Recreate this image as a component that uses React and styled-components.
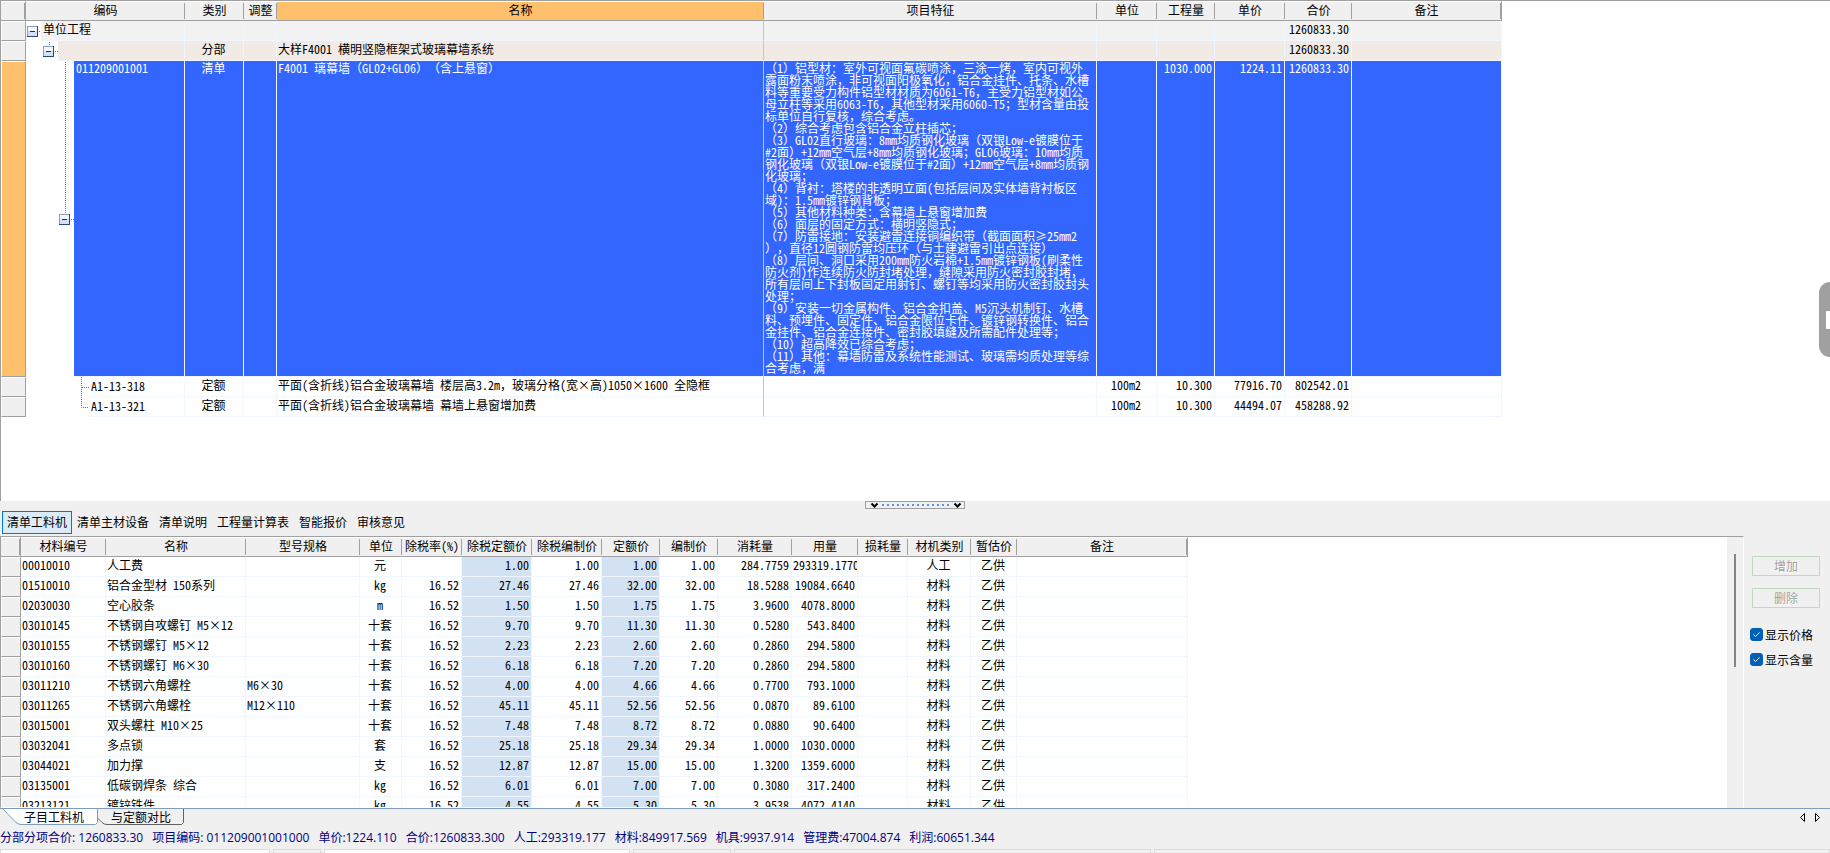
import React from 'react'
import styled, { createGlobalStyle } from 'styled-components'

const GlobalStyle = createGlobalStyle`
  *, *::before, *::after {
    box-sizing: border-box;
  }

  html, body, #root {
    height: 100%;
    margin: 0;
  }

  body, button, input {
    font-family: 'Noto Sans Mono CJK SC', 'Noto Sans CJK SC', sans-serif;
    font-size: 12px;
    line-height: 16px;
    color: #000;
    text-spacing-trim: space-all;
  }
`

const Window = styled.div`
  display: flex;
  flex-direction: column;
  height: 100vh;
  min-height: 600px;
  overflow: hidden;
  background: #f0f0f0;
`

const BudgetPane = styled.section`
  flex: 0 0 501px;
  overflow: hidden;
  background: #fff;
  border-top: 1px solid #a0a0a0;
  border-left: 1px solid #a0a0a0;
`

const Grid = styled.table`
  table-layout: fixed;
  width: ${props => props.$width}px;
  border-collapse: separate;
  border-spacing: 0;
`

const HeadCell = styled.th`
  height: 20px;
  padding: 0 0 2px;
  overflow: hidden;
  font-weight: 400;
  white-space: nowrap;
  background: linear-gradient(#a0a0a0, #a0a0a0) right 1px / 1px 16px no-repeat
    ${props => (props.$active ? '#ffc06e' : '#f0f0f0')};
  border-bottom: 1px solid #a0a0a0;
  border-top: 1px solid #fff;

  &:first-child,
  &:last-child {
    border-right: 1px solid #a0a0a0;
  }
`

const RowHead = styled.th`
  padding: 0;
  background: ${props => (props.$active ? '#ffc06e' : '#f0f0f0')};
  border: 1px solid #a0a0a0;
  border-top-color: #fff;
  border-left-color: #fff;
`

const Cell = styled.td`
  height: 20px;
  padding: ${props => (props.$top ? '1px 2px 0 1px' : '0 2px 3px 1px')};
  overflow: hidden;
  line-height: ${props => (props.$top ? 12 : 16)}px;
  vertical-align: top;
  text-align: ${props => props.$align || 'left'};
  white-space: pre;
  background: ${props => props.$tint || 'transparent'};
  border-right: 1px solid #f0f6ff;
  border-bottom: 1px solid #f0f6ff;
`

const rowColors = {
  unit: { back: '#f2f2f2', text: '#000' },
  section: { back: '#f2eae4', text: '#000' },
  item: { back: '#3366ff', text: '#fff' },
  quota: { back: '#fff', text: '#000' },
}

const BudgetRow = styled.tr`
  height: ${props => (props.$kind === 'item' ? 316 : 20)}px;
  color: ${props => rowColors[props.$kind].text};

  ${Cell} {
    background: ${props => rowColors[props.$kind].back};
  }

  ${Cell}:nth-child(5) {
    border-right-color: #a6caf0;
  }
`

const TreeCell = styled.td`
  height: inherit;
  padding: 0;
  border-right: 1px solid #f0f6ff;
`

const TreeLine = styled.div`
  display: flex;
  height: ${props => (props.$kind === 'item' ? 316 : 20)}px;
`

const Branch = styled.svg`
  flex: none;
  display: block;
`

const Code = styled.span`
  flex: 1;
  padding-left: 2px;
  line-height: ${props => (props.$kind === 'quota' ? 18 : props.$kind === 'item' ? 14 : 16)}px;
  background: ${props => rowColors[props.$kind].back};
  border-bottom: 1px solid #f0f6ff;
`

const Splitter = styled.div`
  flex: 0 0 10px;
  display: flex;
  justify-content: center;
  align-items: flex-start;
`

const SplitterHandle = styled.button`
  display: block;
  width: 100px;
  height: 8px;
  padding: 0;
  background: #f0f0f0;
  border: 1px solid #a0a0a0;

  svg {
    display: block;
  }
`

const DetailTabs = styled.nav`
  flex: 0 0 25px;
  display: flex;
  align-items: flex-start;
  padding-left: 2px;
`

const DetailTab = styled.button`
  height: 23px;
  padding: 0 4px 1px;
  background: ${props => (props.$active ? '#dcebf8' : 'transparent')};
  border: 1px solid ${props => (props.$active ? '#0078d7' : 'transparent')};
`

const DetailPane = styled.section`
  flex: 1;
  min-height: 0;
  display: flex;
`

const DetailGrid = styled.div`
  flex: 1;
  overflow: hidden;
  background: #fff;
  border-top: 1px solid #a0a0a0;
  border-left: 1px solid #a0a0a0;
  border-bottom: 1px solid #fff;
`

const ScrollTrack = styled.div`
  flex: 0 0 17px;
  padding: 17px 7px 0;
  border-top: 1px solid #a0a0a0;
  border-right: 1px solid #fff;
`

const ScrollThumb = styled.div`
  width: 2px;
  height: 113px;
  background: #858585;
`

const SidePanel = styled.aside`
  flex: 0 0 86px;
  display: flex;
  flex-direction: column;
  padding: 20px 10px 0 6px;
`

const SideButton = styled.button`
  height: 20px;
  margin: 0 0 12px 2px;
  padding: 0;
  background: #f0f0f0;
  border: 1px solid #bcdcbc;

  &:disabled {
    color: #a0a0a0;
    text-shadow: 1px 1px 0 #fff;
  }
`

const CheckLabel = styled.label`
  display: flex;
  align-items: center;
  gap: 2px;
  height: 17px;
  margin-top: 6px;
  margin-bottom: 2px;
  white-space: nowrap;
`

const CheckBox = styled.input`
  appearance: none;
  width: 13px;
  height: 13px;
  margin: 0;
  border: 1px solid #868686;
  border-radius: 3px;

  &:checked {
    border-color: #005fb8;
    background: #005fb8
      url("data:image/svg+xml,%3Csvg xmlns='http://www.w3.org/2000/svg' viewBox='0 0 11 11'%3E%3Cpath d='M2.500 5.500L4.500 7.500L8.500 3.500' fill='none' stroke='%23fff'/%3E%3C/svg%3E");
  }
`

const SheetBar = styled.nav`
  flex: 0 0 19px;
  display: flex;
  justify-content: space-between;
  border-top: 1px solid #7f9db9;
`

const Sheets = styled.div`
  display: flex;
`

const Sheet = styled.button`
  position: relative;
  width: ${props => (props.$active ? 98 : 86)}px;
  height: 17px;
  padding: ${props => (props.$active ? '0 0 2px 10px' : '0 0 2px')};
  line-height: 14px;
  background: none;
  border: 0;

  svg {
    position: absolute;
    inset: 0;
  }

  span {
    position: relative;
  }
`

const SheetArrows = styled.div`
  display: flex;
  gap: 6px;
  padding: 4px 7px 0 0;
`

const ArrowButton = styled.button`
  width: 10px;
  height: 10px;
  padding: 0;
  background: none;
  border: 0;

  svg {
    display: block;
  }
`

const StatusBar = styled.footer`
  flex: 0 0 22px;
  display: flex;
  gap: 9px;
  overflow: hidden;
  font-family: 'Open Sans', 'Noto Sans CJK SC', sans-serif;
  line-height: 22px;
  white-space: pre;
  color: #000080;
`

const BottomStrip = styled.div`
  flex: 0 0 4px;
  display: flex;
  gap: 3px;
`

const StripCell = styled.div`
  flex: ${props => (props.$width ? `0 0 ${props.$width}px` : '1')};
  background: ${props => (props.$light ? '#fff' : '#f0f0f0')};
  border: 1px solid #dcdcdc;
  border-bottom: 0;
`

const budgetColumns = [
  { title: '编码', width: 159 },
  { title: '类别', width: 59 },
  { title: '调整', width: 33 },
  { title: '名称', width: 487, active: true },
  { title: '项目特征', width: 333 },
  { title: '单位', width: 60 },
  { title: '工程量', width: 58 },
  { title: '单价', width: 70 },
  { title: '合价', width: 67 },
  { title: '备注', width: 150 },
]

const feature = `（1）铝型材：室外可视面氟碳喷涂，三涂一烤，室内可视外
露面粉末喷涂，非可视面阳极氧化，铝合金挂件、托条、水槽
料等重要受力构件铝型材材质为6061-T6，主受力铝型材如公
母立柱等采用6063-T6，其他型材采用6060-T5；型材含量由投
标单位自行复核，综合考虑。
（2）综合考虑包含铝合金立柱插芯；
（3）GL02直行玻璃：8mm均质钢化玻璃（双银Low-e镀膜位于
#2面）+12mm空气层+8mm均质钢化玻璃；GL06玻璃：10mm均质
钢化玻璃（双银Low-e镀膜位于#2面）+12mm空气层+8mm均质钢
化玻璃；
（4）背衬：塔楼的非透明立面(包括层间及实体墙背衬板区
域)：1.5mm镀锌钢背板；
（5）其他材料种类：含幕墙上悬窗增加费
（6）面层的固定方式：横明竖隐式；
（7）防雷接地：安装避雷连接铜编织带（截面面积≥25mm2
），直径12圆钢防雷均压环（与土建避雷引出点连接）
（8）层间、洞口采用200mm防火岩棉+1.5mm镀锌钢板(刷柔性
防火剂)作连续防火防封堵处理，缝隙采用防火密封胶封堵，
所有层间上下封板固定用射钉、螺钉等均采用防火密封胶封头
处理；
（9）安装一切金属构件、铝合金扣盖、M5沉头机制钉、水槽
料、预埋件、固定件、铝合金限位卡件、镀锌钢转换件、铝合
金挂件、铝合金连接件、密封胶填缝及所需配件处理等；
（10）超高降效已综合考虑；
（11）其他：幕墙防雷及系统性能测试、玻璃需均质处理等综
合考虑，满`

const budgetRows = [
  { kind: 'unit', code: '单位工程', total: '1260833.30' },
  {
    kind: 'section',
    type: '分部',
    name: '大样F4001 横明竖隐框架式玻璃幕墙系统',
    total: '1260833.30',
  },
  {
    kind: 'item',
    code: '011209001001',
    type: '清单',
    name: 'F4001 璃幕墙（GL02+GL06）（含上悬窗）',
    feature,
    qty: '1030.000',
    price: '1224.11',
    total: '1260833.30',
  },
  {
    kind: 'quota',
    code: 'A1-13-318',
    type: '定额',
    name: '平面(含折线)铝合金玻璃幕墙 楼层高3.2m，玻璃分格(宽×高)1050×1600 全隐框',
    unit: '100m2',
    qty: '10.300',
    price: '77916.70',
    total: '802542.01',
  },
  {
    kind: 'quota',
    code: 'A1-13-321',
    type: '定额',
    name: '平面(含折线)铝合金玻璃幕墙 幕墙上悬窗增加费',
    unit: '100m2',
    qty: '10.300',
    price: '44494.07',
    total: '458288.92',
    last: true,
  },
]

const blue = '#d2e2f3'

const materialColumns = [
  { title: '材料编号', width: 85 },
  { title: '名称', width: 140 },
  { title: '型号规格', width: 114 },
  { title: '单位', width: 42, align: 'center' },
  { title: '除税率(%)', width: 60, align: 'right' },
  { title: '除税定额价', width: 70, align: 'right', tint: blue },
  { title: '除税编制价', width: 70, align: 'right' },
  { title: '定额价', width: 58, align: 'right', tint: blue },
  { title: '编制价', width: 58, align: 'right' },
  { title: '消耗量', width: 74, align: 'right' },
  { title: '用量', width: 66, align: 'right' },
  { title: '损耗量', width: 50, align: 'right' },
  { title: '材机类别', width: 63, align: 'center' },
  { title: '暂估价', width: 46, align: 'center' },
  { title: '备注', width: 171 },
]

// code, name, spec, unit, tax rate, pre-tax price, price, consumption, amount, type
const materials = [
  ['00010010', '人工费', '', '元', '', '1.00', '1.00', '284.7759', '293319.1770', '人工'],
  ['01510010', '铝合金型材 150系列', '', 'kg', '16.52', '27.46', '32.00', '18.5288', '19084.6640', '材料'],
  ['02030030', '空心胶条', '', 'm', '16.52', '1.50', '1.75', '3.9600', '4078.8000', '材料'],
  ['03010145', '不锈钢自攻螺钉 M5×12', '', '十套', '16.52', '9.70', '11.30', '0.5280', '543.8400', '材料'],
  ['03010155', '不锈钢螺钉 M5×12', '', '十套', '16.52', '2.23', '2.60', '0.2860', '294.5800', '材料'],
  ['03010160', '不锈钢螺钉 M6×30', '', '十套', '16.52', '6.18', '7.20', '0.2860', '294.5800', '材料'],
  ['03011210', '不锈钢六角螺栓', 'M6×30', '十套', '16.52', '4.00', '4.66', '0.7700', '793.1000', '材料'],
  ['03011265', '不锈钢六角螺栓', 'M12×110', '十套', '16.52', '45.11', '52.56', '0.0870', '89.6100', '材料'],
  ['03015001', '双头螺柱 M10×25', '', '十套', '16.52', '7.48', '8.72', '0.0880', '90.6400', '材料'],
  ['03032041', '多点锁', '', '套', '16.52', '25.18', '29.34', '1.0000', '1030.0000', '材料'],
  ['03044021', '加力撑', '', '支', '16.52', '12.87', '15.00', '1.3200', '1359.6000', '材料'],
  ['03135001', '低碳钢焊条 综合', '', 'kg', '16.52', '6.01', '7.00', '0.3080', '317.2400', '材料'],
  ['03213121', '镀锌铁件', '', 'kg', '16.52', '4.55', '5.30', '3.9538', '4072.4140', '材料'],
]

const detailTabs = ['清单工料机', '清单主材设备', '清单说明', '工程量计算表', '智能报价', '审核意见']

const totals = [
  '分部分项合价: 1260833.30',
  '项目编码: 011209001001000',
  '单价:1224.110',
  '合价:1260833.300',
  '人工:293319.177',
  '材料:849917.569',
  '机具:9937.914',
  '管理费:47004.874',
  '利润:60651.344',
]

const Toggle = ({ x, y }) => (
  <g>
    <rect x={x + 0.5} y={y + 0.5} width="10" height="10" fill="#d3dff4" stroke="#8a9cbe" />
    <path d={`M${x + 1} ${y + 1}h9v4h-9z`} fill="#f3f6fc" />
    <path d={`M${x + 10.5} ${y}v10.500h-10.500`} fill="none" stroke="#2c4674" />
    <path d={`M${x + 3} ${y + 5.5}h5`} stroke="#1c2f55" />
  </g>
)

const dots = { stroke: '#707070', strokeDasharray: '1 1', fill: 'none' }

const TreeBranch = ({ kind, last }) => {
  if (kind === 'unit') {
    return (
      <Branch width="15" height="20">
        <Toggle x={1} y={5} />
        <path d="M13 10.500h2" {...dots} />
      </Branch>
    )
  }
  if (kind === 'section') {
    return (
      <Branch width="32" height="20">
        <path d="M23.500 1v4M29 10.500h3" {...dots} />
        <Toggle x={17} y={5} />
      </Branch>
    )
  }
  if (kind === 'item') {
    return (
      <Branch width="48" height="316">
        <path d="M39.500 1v152M45 158.500h3" {...dots} />
        <Toggle x={33} y={153} />
      </Branch>
    )
  }
  return (
    <Branch width="63" height="20">
      <path d={last ? 'M55.500 0v10.500h8' : 'M55.500 0v20M56 10.500h8'} {...dots} />
    </Branch>
  )
}

const BudgetTable = () => (
  <Grid $width={1501}>
    <colgroup>
      <col style={{ width: 25 }} />
      {budgetColumns.map(col => (
        <col key={col.title} style={{ width: col.width }} />
      ))}
    </colgroup>
    <thead>
      <tr>
        <HeadCell />
        {budgetColumns.map(col => (
          <HeadCell key={col.title} $active={col.active}>
            {col.title}
          </HeadCell>
        ))}
      </tr>
    </thead>
    <tbody>
      {budgetRows.map((row, i) => {
        const top = row.kind === 'item'
        return (
          <BudgetRow key={i} $kind={row.kind}>
            <RowHead $active={top} />
            <TreeCell>
              <TreeLine $kind={row.kind}>
                <TreeBranch kind={row.kind} last={row.last} />
                <Code $kind={row.kind}>{row.code}</Code>
              </TreeLine>
            </TreeCell>
            <Cell $top={top} $align="center">{row.type}</Cell>
            <Cell $top={top} />
            <Cell $top={top}>{row.name}</Cell>
            <Cell $top={top}>{row.feature}</Cell>
            <Cell $top={top} $align="center">{row.unit}</Cell>
            <Cell $top={top} $align="right">{row.qty}</Cell>
            <Cell $top={top} $align="right">{row.price}</Cell>
            <Cell $top={top} $align="right">{row.total}</Cell>
            <Cell $top={top} />
          </BudgetRow>
        )
      })}
    </tbody>
  </Grid>
)

const MaterialTable = () => (
  <Grid $width={1187}>
    <colgroup>
      <col style={{ width: 20 }} />
      {materialColumns.map(col => (
        <col key={col.title} style={{ width: col.width }} />
      ))}
    </colgroup>
    <thead>
      <tr>
        <HeadCell />
        {materialColumns.map(col => (
          <HeadCell key={col.title}>{col.title}</HeadCell>
        ))}
      </tr>
    </thead>
    <tbody>
      {materials.map(([code, name, spec, unit, rate, net, price, use, amount, type]) => {
        const values = [code, name, spec, unit, rate, net, net, price, price, use, amount, '', type, '乙供', '']
        return (
          <tr key={code}>
            <RowHead />
            {materialColumns.map((col, i) => (
              <Cell key={col.title} $align={col.align} $tint={col.tint}>
                {values[i]}
              </Cell>
            ))}
          </tr>
        )
      })}
    </tbody>
  </Grid>
)

const DrawerGrip = styled.button`
  position: fixed;
  top: 282px;
  right: 0;
  width: 11px;
  height: 75px;
  padding: 0;
  background: #a0a0a0;
  border: 0;
  border-radius: 11px 0 0 11px;

  &::after {
    content: '';
    position: absolute;
    top: 29px;
    right: 0;
    width: 4px;
    height: 18px;
    background: #fff;
  }
`

const App = () => (
  <Window>
    <GlobalStyle />
    <BudgetPane>
      <BudgetTable />
    </BudgetPane>
    <Splitter>
      <SplitterHandle aria-label="折叠">
        <svg width="98" height="6">
          <path d="M5.500 1.500l3 3l3 -3M88.500 1.500l3 3l3 -3" fill="none" stroke="#000" strokeWidth="2" />
          <path d="M16 3h68" stroke="#5a96dc" strokeWidth="2" strokeDasharray="2 3" />
        </svg>
      </SplitterHandle>
    </Splitter>
    <DetailTabs>
      {detailTabs.map((tab, i) => (
        <DetailTab key={tab} $active={i === 0}>
          {tab}
        </DetailTab>
      ))}
    </DetailTabs>
    <DetailPane>
      <DetailGrid>
        <MaterialTable />
      </DetailGrid>
      <ScrollTrack>
        <ScrollThumb />
      </ScrollTrack>
      <SidePanel>
        <SideButton disabled>增加</SideButton>
        <SideButton disabled>删除</SideButton>
        <CheckLabel>
          <CheckBox type="checkbox" defaultChecked />
          显示价格
        </CheckLabel>
        <CheckLabel>
          <CheckBox type="checkbox" defaultChecked />
          显示含量
        </CheckLabel>
      </SidePanel>
    </DetailPane>
    <SheetBar>
      <Sheets>
        <Sheet $active>
          <svg width="98" height="17">
            <path d="M2 -1L15 12.500Q18 15.500 21 15.500H95.500L97.500 13.500V-1" fill="#fff" stroke="#7f9db9" />
          </svg>
          <span>子目工料机</span>
        </Sheet>
        <Sheet>
          <svg width="86" height="17">
            <path d="M-0.500 9L4 13.500Q6 15.500 9 15.500H83.500L85.500 13.500V0" fill="none" stroke="#606060" />
          </svg>
          <span>与定额对比</span>
        </Sheet>
      </Sheets>
      <SheetArrows>
        <ArrowButton aria-label="向左">
          <svg width="10" height="10">
            <path d="M7.500 0.500v8l-4 -4z" fill="none" stroke="#000" />
          </svg>
        </ArrowButton>
        <ArrowButton aria-label="向右">
          <svg width="10" height="10">
            <path d="M2.500 0.500v8l4 -4z" fill="none" stroke="#000" />
          </svg>
        </ArrowButton>
      </SheetArrows>
    </SheetBar>
    <StatusBar>
      {totals.map(text => (
        <span key={text}>{text}</span>
      ))}
    </StatusBar>
    <BottomStrip>
      <StripCell $width={270} $light />
      <StripCell $width={48} />
      <StripCell $width={306} $light />
      <StripCell $width={98} />
      <StripCell $width={417} />
      <StripCell />
    </BottomStrip>
    <DrawerGrip aria-label="展开" />
  </Window>
)

export default App
